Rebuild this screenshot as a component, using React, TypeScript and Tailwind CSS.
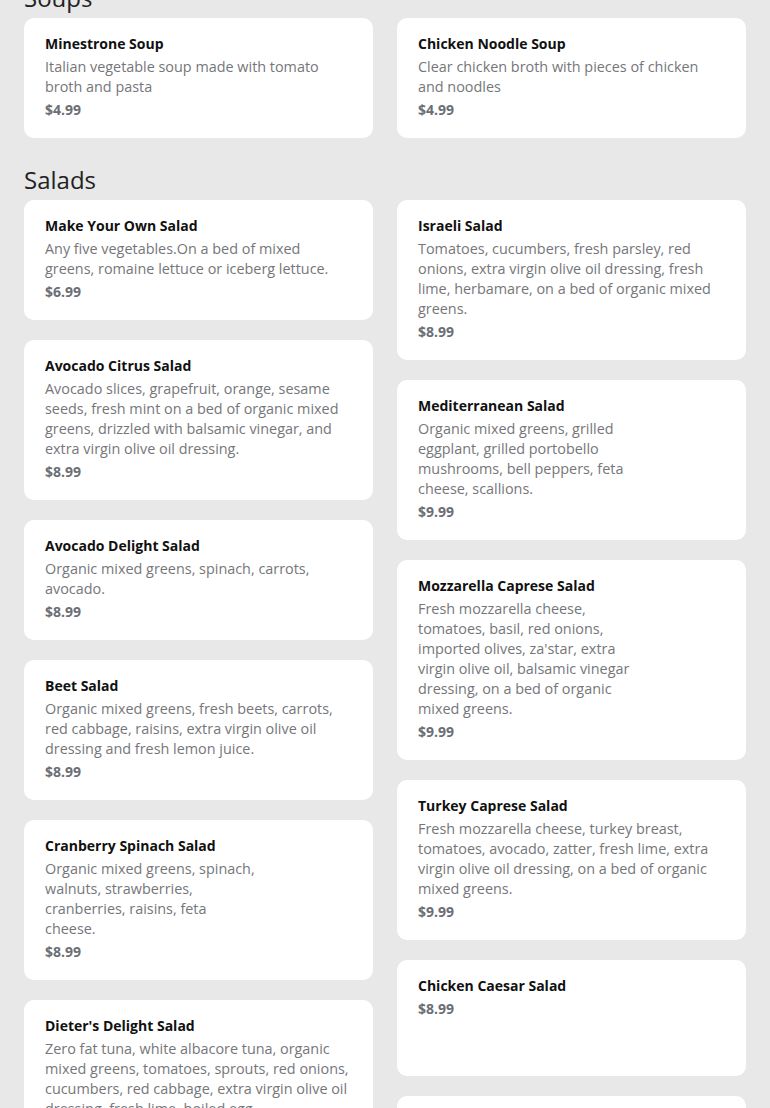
import React from "react";

type Item = { name: string; desc?: string; price: string; img?: boolean };

const soupsLeft: Item[] = [
  { name: "Minestrone Soup", desc: "Italian vegetable soup made with tomato broth and pasta", price: "$4.99" },
];
const soupsRight: Item[] = [
  { name: "Chicken Noodle Soup", desc: "Clear chicken broth with pieces of chicken and noodles", price: "$4.99" },
];

const saladsLeft: Item[] = [
  { name: "Make Your Own Salad", desc: "Any five vegetables.On a bed of mixed greens, romaine lettuce or iceberg lettuce.", price: "$6.99" },
  { name: "Avocado Citrus Salad", desc: "Avocado slices, grapefruit, orange, sesame seeds, fresh mint on a bed of organic mixed greens, drizzled with balsamic vinegar, and extra virgin olive oil dressing.", price: "$8.99" },
  { name: "Avocado Delight Salad", desc: "Organic mixed greens, spinach, carrots, avocado.", price: "$8.99" },
  { name: "Beet Salad", desc: "Organic mixed greens, fresh beets, carrots, red cabbage, raisins, extra virgin olive oil dressing and fresh lemon juice.", price: "$8.99" },
  { name: "Cranberry Spinach Salad", desc: "Organic mixed greens, spinach, walnuts, strawberries, cranberries, raisins, feta cheese.", price: "$8.99", img: true },
  { name: "Dieter's Delight Salad", desc: "Zero fat tuna, white albacore tuna, organic mixed greens, tomatoes, sprouts, red onions, cucumbers, red cabbage, extra virgin olive oil dressing, fresh lime, boiled egg.", price: "$9.99" },
];

const saladsRight: Item[] = [
  { name: "Israeli Salad", desc: "Tomatoes, cucumbers, fresh parsley, red onions, extra virgin olive oil dressing, fresh lime, herbamare, on a bed of organic mixed greens.", price: "$8.99" },
  { name: "Mediterranean Salad", desc: "Organic mixed greens, grilled eggplant, grilled portobello mushrooms, bell peppers, feta cheese, scallions.", price: "$9.99", img: true },
  { name: "Mozzarella Caprese Salad", desc: "Fresh mozzarella cheese, tomatoes, basil, red onions, imported olives, za'star, extra virgin olive oil, balsamic vinegar dressing, on a bed of organic mixed greens.", price: "$9.99", img: true },
  { name: "Turkey Caprese Salad", desc: "Fresh mozzarella cheese, turkey breast, tomatoes, avocado, zatter, fresh lime, extra virgin olive oil dressing, on a bed of organic mixed greens.", price: "$9.99" },
  { name: "Chicken Caesar Salad", price: "$8.99", img: true },
  { name: "Greek Salad", desc: "Organic mixed greens, tomatoes, cucumbers, red onions, kalamata olives, feta cheese.", price: "$9.99" },
];

function Card({ item }: { item: Item }) {
  return (
    <div className="flex gap-3 rounded-[10px] bg-white pl-[21px] pr-[21px] pt-4 pb-[18px]">
      <div className="min-w-0 flex-1">
        <div className="text-[14px] font-bold leading-5 text-[#111111]">{item.name}</div>
        {item.desc && (
          <div className="mt-[3px] text-[14.4px] leading-5 text-[#75767a]">{item.desc}</div>
        )}
        <div className="mt-[3px] text-[14px] font-bold leading-5 text-[#6b6e75]">{item.price}</div>
      </div>
      {item.img && <div className="h-[82px] w-[81px] shrink-0" />}
    </div>
  );
}

function Section({ title, left, right, first }: { title: string; left: Item[]; right: Item[]; first?: boolean }) {
  return (
    <section className={first ? "" : "mt-[26px]"}>
      <h2 className="mb-1 text-[24px] font-normal leading-8 text-[#222222]">{title}</h2>
      <div className="grid grid-cols-2 items-start gap-6">
        <div className="flex flex-col gap-5">
          {left.map((it) => (
            <Card key={it.name} item={it} />
          ))}
        </div>
        <div className="flex flex-col gap-5">
          {right.map((it) => (
            <Card key={it.name} item={it} />
          ))}
        </div>
      </div>
    </section>
  );
}

export default function App() {
  return (
    <div
      className="h-[1108px] overflow-hidden bg-[#e8e8e8] px-6"
      style={{ fontFamily: '"Open Sans", "Noto Sans", sans-serif' }}
    >
      <div className="-mt-[18px]">
        <Section title="Soups" left={soupsLeft} right={soupsRight} first />
        <Section title="Salads" left={saladsLeft} right={saladsRight} />
      </div>
    </div>
  );
}
